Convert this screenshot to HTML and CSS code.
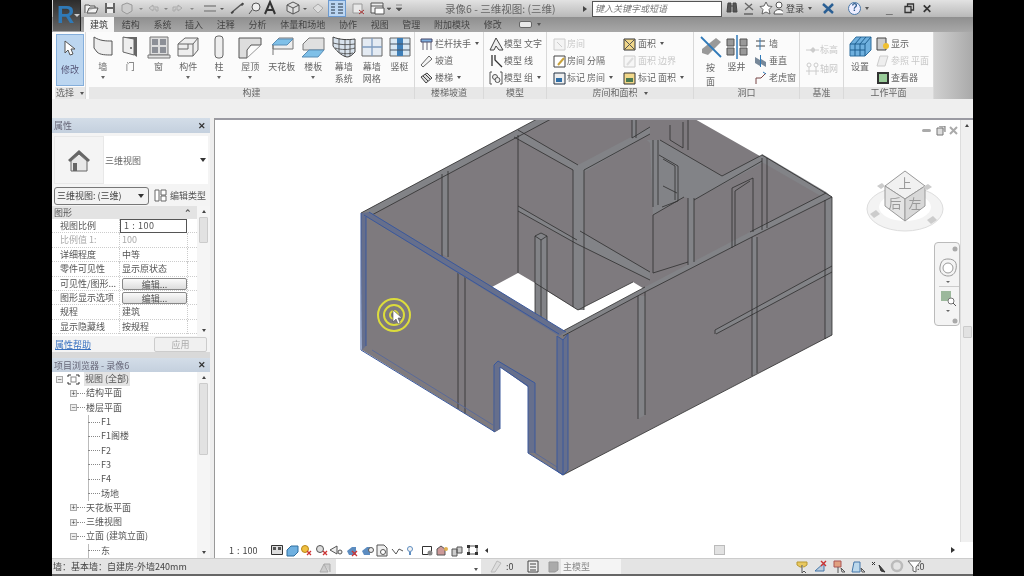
FILE: index.html
```html
<!DOCTYPE html>
<html lang="zh">
<head>
<meta charset="utf-8">
<title>Revit</title>
<link rel="stylesheet" href="styles.css">
</head>
<body>
<div class="app">
  <div class="logo"><span class="logo-r">R</span><span class="logo-arrow"></span></div>

  <header class="titlebar">
    <svg class="qat" width="324" height="17" viewBox="80 0 324 17">
      <path d="M85 13V5h4l1 1h5v2h-6l-2 5h9l2-5h-3" fill="#f2f2f2" stroke="#555"/>
      <path d="M105 3h10v10h-10z" fill="#666"/><path d="M107 3h6v4h-6zM107 9h6v4h-6z" fill="#eee"/>
      <path d="M122 5l5-2 5 2v6l-5 3-5-3z" fill="#ccc" stroke="#999"/>
      <path d="M149 8l4-3v2h5v4h-2V9h-3v2z" fill="#ccc" stroke="#aaa"/>
      <path d="M182 8l-4-3v2h-5v4h2V9h3v2z" fill="#ccc" stroke="#aaa"/>
      <path d="M139 8h4l-2 2zM164 8h4l-2 2zM190 8h4l-2 2z" fill="#888"/>
      <path d="M204 6h12M204 11h12" stroke="#999" stroke-width="2"/><path d="M220 8h4l-2 2z" fill="#555"/>
      <path d="M231 13l12-10" stroke="#555" stroke-width="1.500"/><path d="M231 13h2v-2M243 3v2h-2" stroke="#333" fill="none"/>
      <circle cx="256" cy="7" r="4" fill="#eee" stroke="#555"/><path d="M252 10l-3 4" stroke="#555"/>
      <path d="M265 14l5-12 5 12M267 10h6" fill="none" stroke="#333" stroke-width="2"/>
      <path d="M287 5l6-3 6 3v6l-6 3-6-3z" fill="#ddd" stroke="#555"/><path d="M287 5l6 3 6-3M293 8v6" stroke="#555" fill="none"/>
      <path d="M303 8h4l-2 2z" fill="#555"/>
      <path d="M313 8l5-4 5 4-5 5z" fill="#ddd" stroke="#aaa"/>
      <rect x="328.500" y="0.500" width="17" height="16" fill="#bcd6f2" stroke="#6c9ad0"/>
      <path d="M331 4h4M331 7h4M331 10h4M331 13h4M338 4h5M338 7h5M338 10h5M338 13h5" stroke="#234" stroke-width="1.200"/>
      <path d="M353 4h9v9h-9z" fill="#e8e8e8" stroke="#999"/><path d="M359 10l5 4M364 10l-5 4" stroke="#a33"/>
      <path d="M371 3h12v10h-12z" fill="#eee" stroke="#555"/><path d="M371 6h12M375 8h9v6h-9z" fill="#fff" stroke="#555"/>
      <path d="M387 8h4l-2 2zM396 5h6M396 8h6l-3 3z" fill="#555" stroke="#555" stroke-width="0.600"/>
    </svg>
    <div class="doc-title">录像6 - 三维视图: (三维)</div>
    <span class="tri-right"></span>
    <div class="search">键入关键字或短语</div>
    <div class="tools">
      <svg width="58" height="17" viewBox="0 0 58 17">
        <path d="M3 3h3v9H2zM8 3h3l1 9H8zM6 6h2" fill="#555" stroke="#444"/>
        <path d="M20 3l8 7M20 10l7-6M19 14h9" stroke="#666" fill="none" stroke-width="1.300"/>
        <path d="M41 2l2 4 4 .5-3 3 1 4.500-4-2-4 2 1-4.500-3-3 4-.5z" fill="#fff" stroke="#666"/>
        <circle cx="54" cy="5" r="3" fill="#fff" stroke="#555"/><path d="M49 14c0-6 10-6 10 0z" fill="#fff" stroke="#555"/>
      </svg>
      <span class="login">登录</span>
      <span class="caret-sm login-caret"></span>
      <svg class="x-ic" width="13" height="13" viewBox="0 0 13 13"><path d="M1 2l10 9M11 2L2 11" stroke="#2a5f94" stroke-width="2.500"/></svg>
      <span class="help">?</span>
      <span class="caret-sm"></span>
      <span class="win win-min">_</span>
      <svg class="win-rest" width="11" height="11" viewBox="0 0 11 11"><path d="M3.500 3V1h6v6H7M1 3.500h6v6H1z" fill="none" stroke="#333" stroke-width="1.300"/></svg>
      <span class="win win-x">✕</span>
    </div>
  </header>

  <nav class="tabs">
    <span class="tab active">建筑</span><span class="tab">结构</span><span class="tab">系统</span><span class="tab">插入</span><span class="tab">注释</span><span class="tab">分析</span><span class="tab">体量和场地</span><span class="tab">协作</span><span class="tab">视图</span><span class="tab">管理</span><span class="tab">附加模块</span><span class="tab">修改</span>
    <span class="pill"></span><span class="caret-sm"></span>
  </nav>

  <section class="ribbon">
    <div class="panel p-select">
      <div class="panel-body">
        <div class="modify">
          <svg width="14" height="18" viewBox="0 0 14 18"><path d="M2 1l0 12 3-3 2 5 3-1-2-5h4z" fill="#fff" stroke="#555"/></svg>
          <span>修改</span>
        </div>
      </div>
      <div class="panel-foot">选择 <i class="caret-sm"></i></div>
    </div>

    <div class="panel p-build">
      <div class="panel-body build-grid">
        <div class="big"><svg width="24" height="24" viewBox="0 0 24 24"><path d="M3 2c6 4 12 4 18 4v14c-6 0-12 0-15-3l-3-4z" fill="#eee" stroke="#555"/></svg><span>墙</span><i class="dot"></i></div>
        <div class="big"><svg width="20" height="24" viewBox="0 0 20 24"><path d="M3 2h14v20l-3-2V4H3z" fill="#666"/><path d="M3 2l11 2v16l-11-3z" fill="#eee" stroke="#666"/><circle cx="11" cy="13" r="1" fill="#555"/></svg><span>门</span></div>
        <div class="big"><svg width="24" height="24" viewBox="0 0 24 24"><path d="M3 2h18v18H3z" fill="#ddd" stroke="#777"/><path d="M5 4h6v6H5zM13 4h6v6h-6zM5 12h6v6H5zM13 12h6v6h-6z" fill="#8d9097"/><path d="M1 20h22v3H1z" fill="#e4e4e4" stroke="#777"/></svg><span>窗</span></div>
        <div class="big"><svg width="24" height="24" viewBox="0 0 24 24"><path d="M2 9l7-6h13v12l-5 6H2z" fill="#eee" stroke="#666"/><path d="M2 9h15v12M17 9l5-6M12 9v5H2" fill="none" stroke="#666"/></svg><span>构件</span><i class="dot"></i></div>
        <div class="big"><svg width="12" height="24" viewBox="0 0 12 24"><rect x="2" y="1" width="8" height="22" rx="3" fill="#eee" stroke="#666"/></svg><span>柱</span><i class="dot"></i></div>
        <div class="big"><svg width="24" height="24" viewBox="0 0 24 24"><path d="M1 3h22v7H13l-4 5v8H1z" fill="#ddd" stroke="#555"/><path d="M9 23l14-13" stroke="#999"/></svg><span>屋顶</span><i class="dot"></i></div>
        <div class="big"><svg width="24" height="24" viewBox="0 0 24 24"><path d="M9 3h14v11H3V9z" fill="#eee" stroke="#777"/><path d="M8 4h15l-6 6H2z" fill="#7fc0e8" stroke="#5a8db5"/><path d="M3 10v10" stroke="#777"/></svg><span>天花板</span></div>
        <div class="big"><svg width="24" height="24" viewBox="0 0 24 24"><path d="M8 3h15v12H2V9z" fill="#e0e0e0" stroke="#777"/><path d="M8 15h15l-6 7H1z" fill="#7fc0e8" stroke="#5a8db5"/></svg><span>楼板</span><i class="dot"></i></div>
        <div class="big"><svg width="24" height="24" viewBox="0 0 24 24"><path d="M1 2c7 3 15 3 22 2v13c-3 3-5 5-8 5-6-1-12-8-14-11z" fill="#d8e2ec" stroke="#444"/><path d="M7 3v15M13 4v18M18 4v17M1 8c7 2 15 2 22 1M3 13c7 2 13 2 20 0M8 18c5 1 9 1 13 0" fill="none" stroke="#444" stroke-width="0.800"/></svg><span>幕墙</span><span>系统</span></div>
        <div class="big"><svg width="22" height="24" viewBox="0 0 22 24"><path d="M1 3h20v18H1z" fill="#e4ebf3" stroke="#666"/><path d="M1 12h20M11 3v18" stroke="#7d9cc0" stroke-width="1.300"/></svg><span>幕墙</span><span>网格</span></div>
        <div class="big"><svg width="22" height="24" viewBox="0 0 22 24"><path d="M1 3h20v18H1z" fill="#d8e8f4" stroke="#666"/><path d="M8 3h6v18H8z" fill="#3f7fb8"/><path d="M1 9h20M1 15h20" stroke="#456"/></svg><span>竖梃</span></div>
      </div>
      <div class="panel-foot">构建</div>
    </div>

    <div class="panel p-stair">
      <div class="panel-body rows">
        <div class="row"><svg class="ic" width="15" height="14" viewBox="0 0 15 14"><path d="M1 2h11v3H1z" fill="#7fb0e0" stroke="#446"/><path d="M3 5v8M7 5v8M11 5v8" stroke="#667"/></svg>栏杆扶手 <i class="caret-sm"></i></div>
        <div class="row"><svg class="ic" width="15" height="14" viewBox="0 0 15 14"><path d="M1 11L9 2l3 3-9 8z" fill="#f4f4f4" stroke="#666"/></svg>坡道</div>
        <div class="row"><svg class="ic" width="15" height="14" viewBox="0 0 15 14"><path d="M1 6l6-4 5 5-6 5z" fill="#ddd" stroke="#444"/><path d="M3 5l5 5M5 3l5 5" stroke="#444"/></svg>楼梯 <i class="caret-sm"></i></div>
      </div>
      <div class="panel-foot">楼梯坡道</div>
    </div>

    <div class="panel p-model">
      <div class="panel-body rows">
        <div class="row"><svg class="ic" width="15" height="14" viewBox="0 0 15 14"><path d="M7 1L1 13h4l2-4 3 4h4z" fill="#eee" stroke="#444"/></svg>模型 文字</div>
        <div class="row"><svg class="ic" width="15" height="14" viewBox="0 0 15 14"><path d="M3 1v11M6 1v5l7 7" fill="none" stroke="#333" stroke-width="1.300"/></svg>模型 线</div>
        <div class="row"><svg class="ic" width="15" height="14" viewBox="0 0 15 14"><path d="M3 1H1v12h2M11 1h2v12h-2" fill="none" stroke="#555"/><circle cx="6" cy="6" r="2.500" fill="#eee" stroke="#555"/><circle cx="8.500" cy="9" r="2.500" fill="#eee" stroke="#555"/></svg>模型 组 <i class="caret-sm"></i></div>
      </div>
      <div class="panel-foot">模型</div>
    </div>

    <div class="panel p-room">
      <div class="panel-body two-cols">
        <div class="rows rows-flat">
          <div class="row dim"><svg class="ic" width="15" height="14" viewBox="0 0 15 14"><path d="M2 2h11v11H2z" fill="#f4f4f4" stroke="#ccc"/><path d="M5 5l5 5" stroke="#ccc"/></svg>房间</div>
          <div class="row"><svg class="ic" width="15" height="14" viewBox="0 0 15 14"><path d="M2 2h11v11H2z" fill="#fff" stroke="#444"/><path d="M6 11l6-7" stroke="#c9a23a" stroke-width="2"/></svg>房间 分隔</div>
          <div class="row"><svg class="ic" width="15" height="14" viewBox="0 0 15 14"><path d="M2 2h11v11H2z" fill="#eee" stroke="#234"/><path d="M4 7h6v4H4z" fill="#2f6fa8"/></svg>标记 房间 <i class="caret-sm"></i></div>
        </div>
        <div class="rows rows-flat">
          <div class="row"><svg class="ic" width="15" height="14" viewBox="0 0 15 14"><path d="M1 2h11v11H1z" fill="#f2d88a" stroke="#333"/><path d="M2 3l9 9M11 3l-9 9" stroke="#555"/></svg>面积 <i class="caret-sm"></i></div>
          <div class="row dim"><svg class="ic" width="15" height="14" viewBox="0 0 15 14"><path d="M1 2h11v11H1z" fill="#f6f6f6" stroke="#ccc"/><path d="M4 11l6-7" stroke="#ddd" stroke-width="2"/></svg>面积 边界</div>
          <div class="row"><svg class="ic" width="15" height="14" viewBox="0 0 15 14"><path d="M1 2h11v11H1z" fill="#f2d88a" stroke="#333"/><path d="M3 7h7v4H3z" fill="#4a7a50"/></svg>标记 面积 <i class="caret-sm"></i></div>
        </div>
      </div>
      <div class="panel-foot">房间和面积 <i class="caret-sm"></i></div>
    </div>

    <div class="panel p-open">
      <div class="panel-body open-body">
        <div class="big big-a"><svg width="24" height="24" viewBox="0 0 24 24"><path d="M3 14l14-11 5 4-13 13-6-2z" fill="#999"/><path d="M2 2l20 20" stroke="#2f79b8" stroke-width="1.800"/></svg><span>按</span><span>面</span></div>
        <div class="big big-b"><svg width="22" height="24" viewBox="0 0 22 24"><path d="M1 4h7v7H1zM14 4h7v7h-7zM1 13h7v7H1zM14 13h7v7h-7z" fill="#999" stroke="#555"/><path d="M11 0v24" stroke="#2f79b8" stroke-width="1.500"/></svg><span>竖井</span></div>
        <div class="rows rows-flat">
          <div class="row"><svg class="ic" width="15" height="14" viewBox="0 0 15 14"><path d="M2 4h9M2 9h9" stroke="#444"/><path d="M6 1v12" stroke="#2f79b8"/></svg>墙</div>
          <div class="row"><svg class="ic" width="15" height="14" viewBox="0 0 15 14"><path d="M1 3l5 3v6L1 9zM7 5l5 3v5l-5-3z" fill="#789"/><path d="M6.500 1v12" stroke="#2f79b8"/></svg>垂直</div>
          <div class="row"><svg class="ic" width="15" height="14" viewBox="0 0 15 14"><path d="M2 13V7h5L12 2" fill="none" stroke="#744"/><path d="M9 1l3 2" stroke="#2f79b8"/></svg>老虎窗</div>
        </div>
      </div>
      <div class="panel-foot">洞口</div>
    </div>

    <div class="panel p-datum">
      <div class="panel-body rows datum-rows">
        <div class="row dim"><svg class="ic" width="15" height="14" viewBox="0 0 15 14"><path d="M1 7h5M11 7h3" stroke="#ccc"/><path d="M8 4l3 3-3 3-3-3z" fill="#ccc"/></svg>标高</div>
        <div class="row dim"><svg class="ic" width="15" height="14" viewBox="0 0 15 14"><circle cx="4" cy="3" r="2" fill="none" stroke="#ccc"/><circle cx="11" cy="3" r="2" fill="none" stroke="#ccc"/><path d="M4 5v8M11 5v8M1 9h13" stroke="#ccc"/></svg>轴网</div>
      </div>
      <div class="panel-foot">基准</div>
    </div>

    <div class="panel p-work">
      <div class="panel-body work-body">
        <div class="big big-c"><svg width="24" height="24" viewBox="0 0 24 24"><path d="M2 9l6-7h15v13l-6 6H2z" fill="#6fb0de" stroke="#2f6f9f"/><path d="M2 9h15v12M17 9l6-7M7 9v12M12 9v12M2 15h15M13 2l-6 7M18 2l-6 7" fill="none" stroke="#1f5f8f"/></svg><span>设置</span></div>
        <div class="rows rows-flat">
          <div class="row"><svg class="ic" width="15" height="14" viewBox="0 0 15 14"><path d="M1 1h9v12H1z" fill="#ccc" stroke="#444"/><circle cx="10" cy="9" r="3" fill="#f0c030"/></svg>显示</div>
          <div class="row dim"><svg class="ic" width="15" height="14" viewBox="0 0 15 14"><path d="M1 12l3-10h8l-3 10z" fill="#eee" stroke="#ccc"/></svg>参照 平面</div>
          <div class="row"><svg class="ic" width="15" height="14" viewBox="0 0 15 14"><path d="M1 1h12v12H1z" fill="#333"/><path d="M3 3h8v8H3z" fill="#9c9"/></svg>查看器</div>
        </div>
      </div>
      <div class="panel-foot">工作平面</div>
    </div>
    <div class="ribbon-end"></div>
  </section>

  <div class="band"></div>

  <main class="main">
    <aside class="side">
      <section class="props">
        <div class="pane-head"><span>属性</span><b>✕</b></div>
        <div class="type-box">
          <div class="type-thumb"><svg width="26" height="26" viewBox="0 0 26 26"><path d="M2 13L13 3l11 10-2 2-9-8-9 8z" fill="#666"/><path d="M5 14l8-7 8 7v10H5z" fill="#e8e8e8" stroke="#666"/><path d="M7 16h4v8H7z" fill="#666"/></svg></div>
          <span class="type-name">三维视图</span>
          <i class="caret"></i>
        </div>
        <div class="type-line">
          <div class="select">三维视图: (三维)<i class="caret"></i></div>
          <div class="edit-type"><svg width="13" height="13" viewBox="0 0 13 13"><path d="M1 1h4v11H1zM7 1h5v5H7zM7 7h5v5H7z" fill="#fff" stroke="#666"/></svg>编辑类型</div>
        </div>
        <div class="prop-wrap">
          <div class="prop-table">
            <div class="group"><span>图形</span><b>⌃</b></div>
            <div class="prop"><span>视图比例</span><span class="val val-input">1 : 100</span></div>
            <div class="prop muted"><span>比例值 1:</span><span class="val">100</span></div>
            <div class="prop"><span>详细程度</span><span class="val">中等</span></div>
            <div class="prop"><span>零件可见性</span><span class="val">显示原状态</span></div>
            <div class="prop"><span>可见性/图形...</span><span class="val"><em class="btn">编辑...</em></span></div>
            <div class="prop"><span>图形显示选项</span><span class="val"><em class="btn">编辑...</em></span></div>
            <div class="prop"><span>规程</span><span class="val">建筑</span></div>
            <div class="prop"><span>显示隐藏线</span><span class="val">按规程</span></div>
          </div>
          <div class="vscroll"><i class="up"></i><i class="thumb thumb-a"></i><i class="down"></i></div>
        </div>
        <div class="prop-foot"><a class="help-link">属性帮助</a><span class="apply">应用</span></div>
      </section>
      <section class="browser">
        <div class="pane-head"><span>项目浏览器 - 录像6</span><b>✕</b></div>
        <div class="tree-wrap">
          <div class="tree">
            <div class="node l0"><i class="tg">−</i><svg width="13" height="11" viewBox="0 0 13 11"><path d="M1 3V1h3M9 1h3v2M12 8v2H9M4 10H1V8" fill="none" stroke="#333"/><rect x="4" y="3" width="5" height="5" fill="none" stroke="#888"/></svg><span class="sel">视图 (全部)</span></div>
            <div class="node l1"><i class="tg">+</i><u></u>结构平面</div>
            <div class="node l1"><i class="tg">−</i><u></u>楼层平面</div>
            <div class="node l2"><u></u>F1</div>
            <div class="node l2"><u></u>F1阁楼</div>
            <div class="node l2"><u></u>F2</div>
            <div class="node l2"><u></u>F3</div>
            <div class="node l2"><u></u>F4</div>
            <div class="node l2"><u></u>场地</div>
            <div class="node l1"><i class="tg">+</i><u></u>天花板平面</div>
            <div class="node l1"><i class="tg">+</i><u></u>三维视图</div>
            <div class="node l1"><i class="tg">−</i><u></u>立面 (建筑立面)</div>
            <div class="node l2"><u></u>东</div>
          </div>
          <div class="vscroll"><i class="up"></i><i class="thumb thumb-b"></i><i class="down"></i></div>
        </div>
      </section>
    </aside>

    <div class="view">
      <div class="view-top">
        <div class="canvas">
          <svg class="model" viewBox="214 120 746 421" width="746" height="421">
            <path class="wall" d="M361 213L540 118H693L832 197V335L563 475L528 453V386L500 367V429L495 432L362 350Z"/>
            <path class="gap" d="M492 287L518 273L535 283V314L547 321V291L578 310L633 282L646 290L563 334Z"/>
            <path class="strip" d="M361 213L537 119L551 119L370 216Z"/>
            <path class="strip" d="M518 130L578 165L650 127L650 134L584 172L578 172L514 137Z"/>
            <path class="strip" d="M518 206L577 240L580 231L650 272V280L577 244L518 211Z"/>
            <path class="strip" d="M647 140L660 140L722 176L762 155L768 160L694 200L684 197L653 215L650 143Z"/>
            <path class="strip" d="M832 197L752 237L645 292L563 336L563 331L645 287L750 232L826 193Z"/>
            <path class="strip" d="M762 154L826 192L832 197L826 199L760 161Z"/>
            <path class="strip" d="M715 330L832 266V272L716 334Z"/>
            <path class="strip" d="M825 200L832 197V335L825 339Z"/>
            <path class="strip" d="M652 140H658V205L653 207Z"/>
            <path class="strip" d="M632 118H636V138H632Z"/>
            <path class="strip" d="M573 170H584V310L578 310L573 307Z"/>
            <path class="strip" d="M442 174L448 171V257L442 254Z"/>
            <path class="strip" d="M535 236L541 233L547 236V321L541 318L535 314Z"/>
            <path class="strip" d="M688 198H694V265L688 268Z"/>
            <path class="strip" d="M752 237H757V373L752 376Z"/>
            <path class="strip" d="M638 296H645V415L638 419Z"/>
            <g class="ln">
              <path d="M361 213L537 119M370 216L551 119M518 135V273M518 130L578 165M514 137L573 170M584 170L650 134"/>
              <path d="M518 206L577 240M518 211L577 244M580 231L650 272M577 244L650 280"/>
              <path d="M573 170V307M584 170V310M578 310L535 283M578 310L633 282"/>
              <path d="M442 174V257M448 171V257M535 236V314M541 240V318M547 236V321M535 236L541 233L547 236L541 240Z"/>
              <path d="M653 140V207M658 140V205M660 140L722 176M722 176L762 155M653 215V273M653 215L684 197M694 200L762 161M688 198V265M694 198V262"/>
              <path d="M659 155L678 166V201L662 207M663 159L675 166V200M663 186L677 193"/>
              <path d="M732 248V188L753 178V232M735 246V191L750 181"/>
              <path d="M632 118V138M636 118V138M650 127L632 138M670 125V140L683 148V122M688 118V150"/>
              <path d="M762 158V230M767 158V228M762 155L832 197M750 232L826 193M752 237L832 197"/>
              <path d="M645 292L752 237M563 331L645 287M563 336L645 292M653 273L688 262"/>
              <path d="M752 237V376M757 237V373M638 296V419M645 292V415M825 200V339M832 197V335L563 475"/>
              <path d="M715 330L832 266M716 334L832 272M715 330V334"/>
              <path d="M458 271V409M465 275V414"/>
            </g>
            <path class="hl-fill" d="M362 213L369 212L566 332L559 336L364 215Z"/>
            <path class="hl-fill" d="M361 213H366V346L362 350Z"/>
            <path class="hl-fill" d="M557 336L563 340L568 334V470L563 475L557 471Z"/>
            <path class="hl-fill" d="M494 365L500 367V429L495 432Z"/>
            <path class="hl-fill" d="M528 386L535 383V453H528Z"/>
            <path class="hl-fill" d="M494 365L498 361L535 383L528 387L500 367Z"/>
            <g class="hl">
              <path d="M364 215L559 334M369 212L566 332M361 213V350L495 432M366 217V346"/>
              <path class="hl-thin" d="M372 350L493 425M535 453L557 467"/>
              <path d="M494 365V432M500 367V429M494 365L498 361L535 383V453M500 367L528 386V453L563 475"/>
              <path d="M557 336V471L563 475L568 470V334M563 340V475M557 336L563 340L568 334"/>
            </g>
            <g class="ring"><circle cx="394" cy="315" r="16"/><circle cx="394" cy="315" r="10"/><circle cx="394" cy="315" r="4"/></g>
            <path class="cursor" d="M393 310V322L396 319L398 324L400 323L398 318H402Z"/>
          </svg>

          <div class="win-ctrl">
            <svg width="36" height="10" viewBox="0 0 36 10"><rect x="0" y="3" width="9" height="3" rx="1.500" fill="#aaa"/><path d="M15 2h6v7h-6zM17 0h6v6" fill="#ddd" stroke="#777"/><path d="M28 1l7 7M35 1l-7 7" stroke="#aaa" stroke-width="2"/></svg>
          </div>

          <svg class="cube" width="80" height="70" viewBox="0 0 80 70">
            <ellipse cx="40" cy="45" rx="38" ry="22" fill="#f3f3f3" stroke="#ddd"/>
            <ellipse cx="40" cy="43" rx="26" ry="14" fill="#fff"/>
            <path d="M20 22l20-15 20 15-20 13z" fill="#f1f1f1" stroke="#999"/>
            <path d="M20 22l20 13v22L20 42z" fill="#e4e4e4" stroke="#999"/>
            <path d="M60 22L40 35v22l20-15z" fill="#d8d8d8" stroke="#999"/>
            <text x="30" y="44" class="cube-t">后</text><text x="50" y="44" class="cube-t">左</text><text x="40" y="24" class="cube-t">上</text>
            <path d="M5 50l6-4 4 4-6 4zM62 56l6-4 4 4-6 4zM58 23l5-3 4 3-5 3zM12 22l5-3 3 3-4 3z" fill="#ccc"/>
          </svg>

          <div class="navbar">
            <svg width="26" height="84" viewBox="0 0 26 84">
              <circle cx="20" cy="6" r="2.500" fill="#aaa"/>
              <path d="M13 16c8 0 9 5 8 10s-4 7-8 7-9-3-8-9 3-8 8-8z" fill="#f4f4f4" stroke="#999"/>
              <circle cx="13" cy="25" r="5" fill="#fff" stroke="#999"/>
              <path d="M11 38h4l-2 2z" fill="#666"/>
              <path d="M4 43.500h20" stroke="#ccc"/>
              <rect x="6" y="48" width="10" height="10" fill="#9cb89c"/>
              <circle cx="16" cy="58" r="3" fill="#fff" stroke="#777"/><path d="M18 60l3 3" stroke="#555"/>
              <path d="M11 67h4l-2 2z" fill="#666"/>
              <circle cx="20" cy="78" r="2.500" fill="#aaa"/>
            </svg>
          </div>
        </div>
        <div class="canvas-scroll"><i class="up"></i><i class="thumb thumb-c"></i></div>
      </div>
      <div class="viewbar">
        <span class="scale">1 : 100</span>
        <svg class="vb-icons" width="218" height="15" viewBox="0 0 218 15">
          <path d="M0.500 2.500h11v9h-11z" fill="#ddd" stroke="#333"/><path d="M2 4h3v3H2zM7 4h3v3H7z" fill="#555"/>
          <path d="M16 7l4-4h7v6l-4 4h-7z" fill="#6fb0e0" stroke="#2f6f9f"/>
          <circle cx="34" cy="6" r="3.500" fill="#f0c040" stroke="#b8871a"/><path d="M36 8l4 4M40 8l-4 4" stroke="#c33" stroke-width="1.300"/>
          <circle cx="49" cy="6" r="3.500" fill="#ddd" stroke="#555"/><path d="M52 8l4 4M56 8l-4 4" stroke="#c33" stroke-width="1.300"/>
          <path d="M59 7l7-4v8zM67 9a2 2 0 1 0 4 0a2 2 0 1 0-4 0" fill="#eee" stroke="#555"/>
          <path d="M76 8l5-4h4v8h-7z" fill="#5c8cc0"/><path d="M81 8l5 5M86 8l-5 5" stroke="#c33" stroke-width="1.300"/>
          <path d="M91 8l5-4h3v8h-6z" fill="#5c8cc0"/><circle cx="100" cy="7" r="2.500" fill="#eee" stroke="#555"/>
          <path d="M106 2h7l3 3v8h-10z" fill="#eee" stroke="#555"/><circle cx="112" cy="9" r="2.500" fill="#fff" stroke="#555"/>
          <path d="M121 6l4 5 3-5 4 2" fill="none" stroke="#555"/>
          <circle cx="139" cy="6" r="2.500" fill="#f4f4f4" stroke="#5c8cc0"/><path d="M138 9h2v3h-2z" fill="#5c8cc0"/>
          <path d="M151.500 3.500h9v8h-9z" fill="#fff" stroke="#333"/><circle cx="159" cy="10" r="2.500" fill="#888"/>
          <path d="M166 12V6l4-3 4 3v6z" fill="#c99" stroke="#555"/><circle cx="175" cy="6" r="2" fill="#e0b050"/>
          <path d="M181 6h5v7h-5zM186 4h5v6h-5z" fill="#ccc" stroke="#555"/>
          <path d="M197 3h9M197 11h9M198 3v8M206 3v8" stroke="#555" fill="none"/><path d="M196 2h3v3h-3zM204 2h3v3h-3zM196 9h3v3h-3zM204 9h3v3h-3z" fill="#333"/>
          <path d="M217 5v5l-3-2.500z" fill="#333"/>
        </svg>
        <span class="h-thumb"></span>
        <span class="tri-right tri-bar"></span>
      </div>
    </div>
  </main>

  <footer class="status">
    <div class="status-text">墙：基本墙：自建房-外墙240mm</div>
    <svg class="st-ic1" width="14" height="15" viewBox="0 0 14 15"><path d="M1 13l4-8 4 8zM5 5h6v8" fill="#ccc" stroke="#aaa"/></svg>
    <div class="st-combo"><i class="caret-sm"></i></div>
    <svg class="st-ic2" width="13" height="15" viewBox="0 0 13 15"><path d="M1 13l6-11 4 2-6 9z" fill="#ddd" stroke="#bbb"/></svg>
    <span class="st-zero">:0</span>
    <svg class="st-ic3" width="32" height="13" viewBox="0 0 32 13"><path d="M1 1h10v11H1z" fill="#eee" stroke="#444"/><path d="M3 4h6M3 7h6M3 10h6" stroke="#444"/><path d="M22 2h9v8l-3 2h-6z" fill="#aaa" stroke="#999"/></svg>
    <span class="st-main">主模型</span>
    <svg class="st-right" width="134" height="15" viewBox="0 0 134 15">
      <path d="M2 3h10v3l-3 2H5L2 6z" fill="#e8c860" stroke="#b89830"/><path d="M7 6v8l2-2 2 2" fill="#eee" stroke="#555"/>
      <path d="M20 12l9-8v8z" fill="#bcd" stroke="#47a"/><path d="M26 2l5 5M31 2l-5 5" stroke="#c33" stroke-width="1.400"/>
      <path d="M39 2h7v6h-7z" fill="#e0a080" stroke="#a55"/><path d="M43 8v6" stroke="#555"/><path d="M46 9l4 4-3 0z" fill="#eee" stroke="#555"/>
      <path d="M59 3h6v10h-8z" fill="#bcd8ec" stroke="#47a"/><path d="M66 9l4 4-3 0z" fill="#eee" stroke="#555"/>
      <path d="M77 3l3 3M80 3l-3 3M84 6l6 7-4-1z" fill="#444" stroke="#333"/>
      <circle cx="102" cy="7" r="5" fill="none" stroke="#bbb" stroke-width="2.500"/>
      <path d="M113 2h13l-5 6v5l-3-1V8z" fill="#fff" stroke="#666"/>
    </svg>
    <span class="st-f">:0</span>
  </footer>
</div>
</body>
</html>
```
FILE: styles.css
```css
* { box-sizing: border-box; }
html, body { margin: 0; height: 100%; background: #000; overflow: hidden; }
body { font-family: "Noto Sans CJK SC", "Liberation Sans", sans-serif; font-size: 9px; color: #555; }
i, em, u { font-style: normal; text-decoration: none; }

.app { position: relative; width: 921px; height: 576px; margin-left: 52px; display: flex; flex-direction: column; background: #eee; overflow: hidden; filter: blur(.35px); }

.logo { position: absolute; left: 1px; top: 0; width: 28px; height: 31px; background: linear-gradient(#2c2c2c, #666); z-index: 2; display: flex; padding: 1px 0 0 4px; border-right: 1px solid #222; }
.logo-r { font: bold 24px/28px "Liberation Sans", sans-serif; color: #2f7ab8; }
.logo-arrow { border: 3px solid transparent; border-top-color: #ccc; margin-top: 13px; }

.titlebar { height: 17px; display: flex; align-items: center; background: linear-gradient(#e2e2e2, #b9b9b9); flex: none; }
.qat { margin-left: 28px; flex: none; }
.doc-title { width: 0; white-space: nowrap; margin-left: 41px; font-size: 10.500px; color: #666; flex: none; }
.tri-right { width: 0; height: 0; border: 3px solid transparent; border-left: 4px solid #444; margin-left: 138px; flex: none; }
.search { width: 130px; height: 16px; margin-left: 2px; background: #fff; border: 1px solid #555; font-size: 9px; line-height: 14px; color: #777; font-style: italic; padding-left: 2px; flex: none; }
.tools { display: flex; align-items: center; margin-left: 3px; flex: 1; }
.login { font-size: 9px; margin-left: 3px; color: #444; }
.login-caret { margin-left: 45px; }
.x-ic { margin-left: 10px; }
.help { width: 13px; height: 13px; border-radius: 50%; border: 1.500px solid #4a78a8; color: #345f90; font: bold 10px/10px "Liberation Sans", sans-serif; text-align: center; margin-left: 13px; background: #eef; }
.win { font: bold 12px/12px "Liberation Sans", sans-serif; color: #333; }
.win-min { margin-left: 17px; }
.win-rest { margin-left: 11px; }
.win-x { margin-left: 7px; }

.caret-sm { display: inline-block; width: 0; height: 0; border: 2.500px solid transparent; border-top: 3px solid #555; border-bottom: 0; vertical-align: middle; margin-left: 4px; }
.caret { width: 0; height: 0; border: 3px solid transparent; border-top: 4px solid #333; border-bottom: 0; display: block; }

.tabs { height: 15px; flex: none; display: flex; align-items: center; gap: 13.700px; padding-left: 38px; background: linear-gradient(#8f8f8f, #a8a8a8); color: #444; font-size: 9px; }
.tab { line-height: 15px; }
.tab.active { background: #f7f7f7; margin: 0 -6px; padding: 0 6px; color: #333; position: relative; }
.pill { width: 13px; height: 7px; background: #e8e8e8; border: 1px solid #666; border-radius: 2px; margin-left: 4px; }
.pill + .caret-sm { margin-left: -9px; }

.ribbon { height: 67px; flex: none; display: flex; background: #fbfbfb; padding-left: 3px; }
.panel { display: flex; flex-direction: column; border-right: 1px solid #d9d9d9; flex: none; }
.panel-body { height: 55px; flex: none; }
.panel-foot { height: 12px; flex: none; background: #e7e7e7; text-align: center; line-height: 12px; font-size: 9px; color: #666; }
.p-select { width: 31px; margin-right: 3px; }
.p-build { width: 326px; }
.p-stair { width: 69px; }
.p-model { width: 63px; }
.p-room { width: 147px; }
.p-open { width: 106px; }
.p-datum { width: 44px; }
.p-work { width: 90px; }
.ribbon-end { flex: 1; background: linear-gradient(90deg, #d0d0d0, #a9a9a9); }

.modify { margin: 2px 0 0 1px; width: 28px; height: 52px; background: #bcd6f0; border: 1px solid #84aedb; display: flex; flex-direction: column; align-items: center; gap: 5px; padding-top: 5px; color: #557; }

.build-grid { display: grid; grid-template-columns: 27.500px 27.500px 29px 30.500px 31px 31.500px 31.500px 31.500px 29.500px 26.500px 29px; }
.big { display: flex; flex-direction: column; align-items: center; padding-top: 3px; line-height: 12px; font-size: 9px; color: #666; white-space: nowrap; }
.big svg { margin-bottom: 2px; flex: none; }
.dot { width: 0; height: 0; border: 2px solid transparent; border-top: 3px solid #666; border-bottom: 0; margin-top: 3px; }

.rows { display: flex; flex-direction: column; padding: 3px 0 0 5px; }
.rows-flat { padding-left: 0; }
.row { height: 17px; display: flex; align-items: center; white-space: nowrap; color: #666; font-size: 9px; }
.row .caret-sm { margin-left: 4px; }
.ic { flex: none; }
.dim { color: #c8c8c8; }
.two-cols { display: grid; grid-template-columns: 71px 1fr; padding: 3px 0 0 5px; }
.two-cols .rows-flat { padding-top: 0; }
.open-body { display: grid; grid-template-columns: 29px 29px 1fr; padding: 3px 0 0 2px; }
.open-body .big, .work-body .big { padding-top: 0; }
.open-body .rows-flat, .work-body .rows-flat { padding-top: 0; }
.big-a span { line-height: 14px; }
.big-b { margin-left: -6px; }
.datum-rows { padding-top: 9px; gap: 2px; }
.work-body { display: grid; grid-template-columns: 32px 1fr; padding: 3px 0 0 0; }

.band { height: 19px; flex: none; background: #efefef; }

.main { flex: 1; display: flex; min-height: 0; }
.side { width: 158px; flex: none; display: flex; flex-direction: column; gap: 6px; background: #d9d9d9; }
.pane-head { height: 15px; flex: none; display: flex; justify-content: space-between; align-items: center; background: linear-gradient(#d3dde8, #c4d0de); padding: 0 4px 0 2px; font-size: 9px; color: #667; }
.browser .pane-head { height: 14px; }
.pane-head b { font: bold 9px/10px "Liberation Sans", sans-serif; color: #333; }
.props { background: #f4f4f4; height: 234px; flex: none; display: flex; flex-direction: column; }
.type-box { height: 48px; margin: 3px 2px 0 2px; background: #fff; display: flex; align-items: center; flex: none; }
.type-thumb { width: 50px; height: 48px; flex: none; background: #f4f4f4; border: 1px solid #e8e8e8; display: flex; align-items: center; justify-content: center; }
.type-name { margin-left: 1px; flex: 1; color: #666; }
.type-box .caret { margin-right: 2px; }
.type-line { display: flex; align-items: center; height: 19px; margin-top: 2px; flex: none; padding-left: 2px; }
.select { width: 95px; height: 18px; background: #f2f2f2; border: 1px solid #777; border-radius: 3px; display: flex; align-items: center; justify-content: space-between; padding: 0 4px 0 2px; color: #444; font-size: 9px; white-space: nowrap; }
.edit-type { display: flex; align-items: center; gap: 3px; margin-left: 5px; color: #555; font-size: 9px; white-space: nowrap; }
.prop-wrap { display: flex; height: 130px; flex: none; margin-top: 1px; }
.prop-table { width: 145px; flex: none; background: #fff; }
.group { height: 13px; background: #e3e3e3; display: flex; justify-content: space-between; padding: 0 5px 0 2px; line-height: 13px; font-size: 9px; color: #555; }
.group b { font: bold 9px/15px "Liberation Sans", sans-serif; }
.prop { height: 14.400px; display: grid; grid-template-columns: 68px 1fr; line-height: 14px; border-bottom: 1px dotted #ccc; font-size: 9px; color: #555; white-space: nowrap; }
.prop > span:first-child { padding-left: 8px; border-right: 1px dotted #ccc; overflow: hidden; }
.val { padding-left: 2px; width: 68px; border-right: 1px dotted #ccc; }
.val-input { border: 1px solid #555; background: #fff; line-height: 12px; letter-spacing: .6px; padding-left: 3px; width: 67px; }
.muted { color: #aaa; }
.btn { display: block; height: 12px; margin-top: 1px; line-height: 11px; background: linear-gradient(#fafafa, #dcdcdc); border: 1px solid #888; border-radius: 2px; text-align: center; width: 65px; }
.vscroll { flex: 1; position: relative; background: #f5f5f5; display: flex; flex-direction: column; align-items: center; }
.up, .down { width: 0; height: 0; border: 2.500px solid transparent; flex: none; }
.up { border-bottom: 3px solid #444; border-top: 0; margin-top: 4px; }
.down { border-top: 3px solid #444; border-bottom: 0; margin-top: auto; margin-bottom: 4px; }
.thumb { display: block; background: #e2e2e2; border: 1px solid #ccc; border-radius: 1px; width: 9px; flex: none; margin-top: 4px; }
.thumb-a { height: 26px; }
.thumb-b { height: 72px; }
.prop-foot { flex: 1; display: flex; justify-content: space-between; align-items: center; padding: 0 3px 0 3px; font-size: 9px; }
.help-link { color: #3a72c0; text-decoration: underline; }
.apply { width: 53px; height: 15px; border: 1px solid #ccc; border-radius: 2px; text-align: center; line-height: 13px; color: #aaa; background: #f0f0f0; }

.browser { flex: 1; background: #fff; display: flex; flex-direction: column; min-height: 0; }
.tree-wrap { flex: 1; display: flex; min-height: 0; }
.tree { width: 145px; flex: none; overflow: hidden; }
.node { height: 14.300px; line-height: 14px; display: flex; align-items: center; color: #555; font-size: 9px; white-space: nowrap; }
.tg { width: 7px; height: 7px; border: 1px solid #aaa; background: #eee; font: 7px/5px "Liberation Sans", sans-serif; text-align: center; flex: none; color: #333; }
.node u { border-top: 1px dotted #888; flex: none; }
.l0 { padding-left: 4px; }
.l0 svg { margin: 0 4px 0 4px; flex: none; }
.sel { background: #e4e4e4; padding: 0 1px; }
.l1 { padding-left: 18px; }
.l1 u { width: 8px; margin-right: 1px; }
.l2 { padding-left: 36px; background: linear-gradient(#bbb, #bbb) 36px 0 / 1px 100% no-repeat; }
.l2 u { width: 12px; margin-right: 1px; }

.view { flex: 1; display: flex; flex-direction: column; margin-left: 4px; min-width: 0; border-left: 1px solid #999; }
.view-top { flex: 1; display: flex; min-height: 0; border-top: 2px solid #9a9aa2; }
.canvas { position: relative; flex: 1; background: #fff; overflow: hidden; min-width: 0; }
.canvas-scroll { width: 13px; flex: none; background: #f0f0f0; display: flex; flex-direction: column; align-items: center; border-left: 1px solid #ddd; }
.thumb-c { margin-top: 199px; height: 12px; }
.model { display: block; margin-left: -1px; }
.wall { fill: #7e7a7e; }
.gap { fill: #fff; }
.strip { fill: #828387; }
.ln path { fill: none; stroke: #2e2e2e; stroke-width: .8; }
.hl-fill { fill: #666f8c; }
.hl path { fill: none; stroke: #3a589c; stroke-width: 1; }
.hl .hl-thin { stroke: #5a6a98; }
.ring circle { fill: none; stroke: #dcdc3c; stroke-width: 2; }
.cursor { fill: #fff; stroke: #555; stroke-width: .6; }
.win-ctrl { position: absolute; left: 707px; top: 6px; line-height: 0; }
.cube { position: absolute; left: 650px; top: 44px; }
.cube-t { font-size: 13px; fill: #999; text-anchor: middle; font-family: "Noto Sans CJK SC", sans-serif; }
.navbar { position: absolute; right: 0; top: 122px; width: 26px; height: 84px; border: 1px solid #bbb; border-radius: 4px; background: #f4f4f4; line-height: 0; }

.viewbar { height: 16px; flex: none; background: #fff; display: flex; align-items: center; color: #444; font-size: 9px; }
.scale { margin-left: 14px; width: 42px; flex: none; word-spacing: 1px; }
.vb-icons { flex: none; }
.h-thumb { width: 11px; height: 10px; background: #e2e2e2; border: 1px solid #bbb; margin-left: 225px; flex: none; }
.tri-bar { margin-left: 226px; border: 3px solid transparent; border-left: 4px solid #333; }

.status { height: 18px; flex: none; display: flex; align-items: center; background: #e4e4e4; border-top: 1px solid #ccc; border-bottom: 2px solid #666; color: #555; font-size: 9px; white-space: nowrap; }
.status-text { width: 267px; flex: none; padding-left: 1px; color: #444; }
.st-ic1 { flex: none; }
.st-combo { width: 145px; height: 15px; background: #fff; flex: none; margin-left: 3px; display: flex; align-items: flex-end; justify-content: flex-end; padding: 0 3px 3px 0; }
.st-ic2 { margin-left: 9px; flex: none; }
.st-zero { margin-left: 3px; width: 21px; flex: none; color: #444; }
.st-ic3 { flex: none; }
.st-main { width: 60px; margin-left: 2px; flex: none; background: #f4f4f4; color: #888; padding-left: 2px; height: 15px; line-height: 15px; }
.st-right { margin-left: 174px; flex: none; }
.st-f { margin-left: -12px; color: #444; flex: none; }
```
